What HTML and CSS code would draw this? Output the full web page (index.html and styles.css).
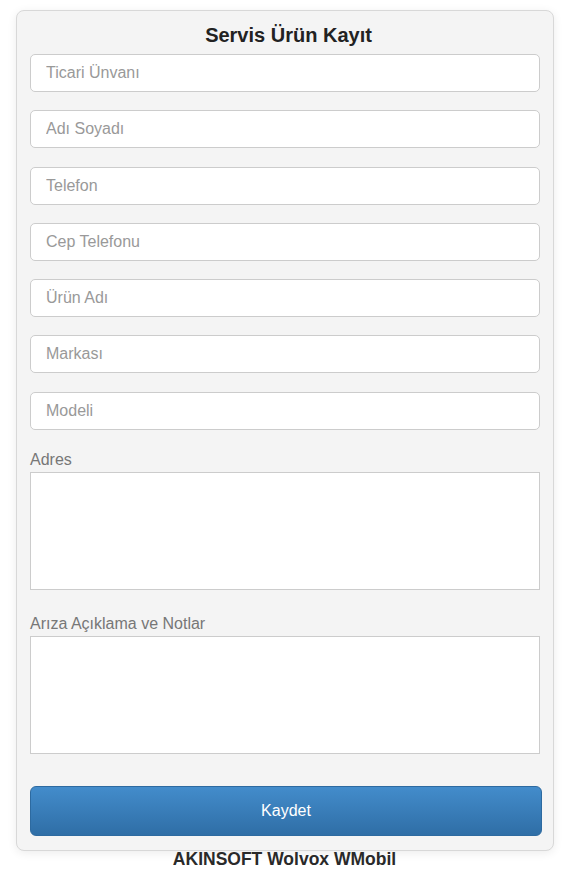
FILE: index.html
```html
<!DOCTYPE html>
<html lang="tr">
<head>
    <meta charset="UTF-8">
    <meta name="viewport" content="width=device-width, initial-scale=1.0">
    <title>Servis Ürün Kayıt</title>
    <link rel="stylesheet" href="styles.css">
</head>
<body>
    <div class="container">
        <h1>Servis Ürün Kayıt</h1>

        <form id="servisForm">
            <input type="text" class="field" name="unvan" placeholder="Ticari Ünvanı">
            <input type="text" class="field" name="adsoyad" placeholder="Adı Soyadı">
            <input type="tel" class="field" name="telefon" placeholder="Telefon">
            <input type="tel" class="field" name="cep" placeholder="Cep Telefonu">
            <input type="text" class="field" name="urun" placeholder="Ürün Adı">
            <input type="text" class="field" name="marka" placeholder="Markası">
            <input type="text" class="field" name="model" placeholder="Modeli">

            <div class="form-group">
                <label for="adres">Adres</label>
                <textarea id="adres" name="adres"></textarea>
            </div>

            <div class="form-group">
                <label for="notlar">Arıza Açıklama ve Notlar</label>
                <textarea id="notlar" name="notlar"></textarea>
            </div>

            <button type="submit" class="submit-btn">Kaydet</button>
        </form>
    </div>

    <div class="footer">AKINSOFT Wolvox WMobil</div>
</body>
</html>
```

FILE: styles.css
```css
* {
    margin: 0;
    padding: 0;
    box-sizing: border-box;
}

body {
    font-family: "Liberation Sans", Arial, sans-serif;
    background: #fff;
    color: #333;
}

.container {
    margin: 10px 15px 0 16px;
    background: #f4f4f4;
    border: 1px solid #d8d8d8;
    border-radius: 8px;
    box-shadow: 0 2px 10px rgba(0,0,0,0.08);
    padding: 13px 13px 14px 13px;
}

h1 {
    font-size: 20px;
    line-height: 22px;
    text-align: center;
    color: #222;
    padding-left: 7px;
    margin-bottom: 8px;
}

.field {
    display: block;
    width: 100%;
    height: 38px;
    margin-bottom: 18.3px;
    padding: 0 15px;
    border: 1px solid #ccc;
    border-radius: 5px;
    background: #fff;
    font-family: inherit;
    font-size: 16px;
    color: #333;
}

.field::placeholder {
    color: #999;
}

.form-group {
    padding-top: 2px;
    margin-bottom: 22px;
}

label {
    display: block;
    font-size: 16px;
    line-height: 20px;
    color: #777;
    margin-bottom: 2px;
}

textarea {
    display: block;
    width: 100%;
    height: 118px;
    border: 1px solid #ccc;
    background: #fff;
    resize: none;
    font-family: inherit;
    font-size: 16px;
}

.submit-btn {
    display: block;
    width: calc(100% + 2px);
    height: 50px;
    margin-top: 32px;
    border: 1px solid #2d6aa0;
    border-radius: 6px;
    background: linear-gradient(to bottom, #438ccb, #2f6ea6);
    color: #fff;
    font-family: inherit;
    font-size: 16px;
    cursor: pointer;
}

.footer {
    text-align: center;
    font-size: 17.5px;
    font-weight: bold;
    color: #2a2a2a;
    line-height: 18px;
    margin-top: -1px;
}
```
